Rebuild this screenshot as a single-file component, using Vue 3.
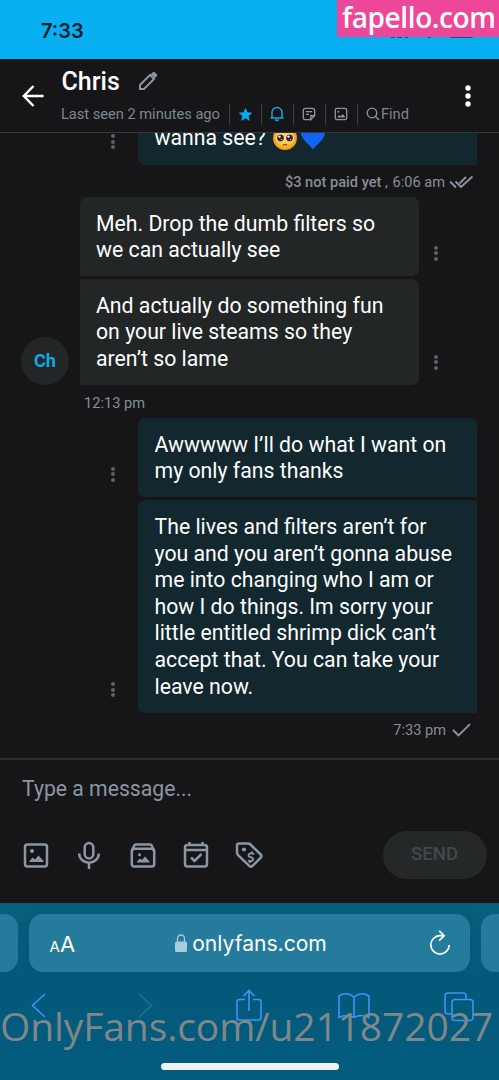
<script setup>
const received = [
  { lines: ['Meh. Drop the dumb filters so', 'we can actually see'] },
  { lines: ['And actually do something fun', 'on your live steams so they', 'aren’t so lame'] },
]
const sent = [
  { lines: ['Awwwww I’ll do what I want on', 'my only fans thanks'] },
  {
    lines: [
      'The lives and filters aren’t for',
      'you and you aren’t gonna abuse',
      'me into changing who I am or',
      'how I do things. Im sorry your',
      'little entitled shrimp dick can’t',
      'accept that. You can take your',
      'leave now.',
    ],
  },
]
</script>

<template>
  <div class="screen">
    <div class="status">
      <span class="clock">7:33</span>
      <svg class="signals" viewBox="0 0 90 3" width="90" height="3">
        <path d="M2 0h4v1H2zM8 0h5v1H8zM16 0h3v1h-3zM39 0h3v1h-3zM60 0h25l-3 1H63z" fill="#075b83" />
      </svg>
      <span class="site">fapello.com</span>
    </div>

    <header class="header">
      <svg class="back" viewBox="0 0 24 24" width="24" height="24">
        <path d="M22.500 12H3M12.500 2 2.800 12l9.700 10" fill="none" stroke="#fff" stroke-width="2.400" />
      </svg>
      <div class="who">
        <div class="name-row">
          <span class="name">Chris</span>
          <svg viewBox="0 0 20 20" width="20" height="20">
            <path d="M2 18v-4L12 4l4 4L6 18z" fill="none" stroke="#8a96a3" stroke-width="2" />
            <path d="m12.800 3.200 2-2q1-1 2 0l2 2q1 1 0 2l-2 2z" fill="#8a96a3" />
          </svg>
        </div>
        <div class="sub-row">
          <span class="seen">Last seen 2 minutes ago</span>
          <i class="bar"></i>
          <span class="cell">
            <svg viewBox="0 0 16 16" width="15" height="15">
              <path d="m8 .8 2.100 4.800 5.300.5-4 3.500 1.200 5.200L8 12.100l-4.600 2.700 1.200-5.200-4-3.500 5.300-.5z" fill="#0cabef" />
            </svg>
          </span>
          <i class="bar"></i>
          <span class="cell">
            <svg viewBox="0 0 16 16" width="16" height="16">
              <path d="M1.500 12h13M3 11.800V6.600a5 5 0 0 1 10 0v5.200M6.200 13.500q1.800 2.200 3.600 0" fill="none" stroke="#10a5e6" stroke-width="1.500" />
            </svg>
          </span>
          <i class="bar"></i>
          <span class="cell">
            <svg viewBox="0 0 16 16" width="14" height="14">
              <path d="M10 14.500H4a2.500 2.500 0 0 1-2.500-2.500V4A2.500 2.500 0 0 1 4 1.500h8A2.500 2.500 0 0 1 14.500 4v6L10 14.500V10h4.500M4.500 5.200h7M4.500 8.500H8" fill="none" stroke="#8a96a3" stroke-width="1.500" />
            </svg>
          </span>
          <i class="bar"></i>
          <span class="cell">
            <svg viewBox="0 0 16 16" width="14" height="14">
              <rect x="1.500" y="1.500" width="13" height="13" rx="2" fill="none" stroke="#8a96a3" stroke-width="1.500" />
              <path d="M4 12v-1l2-2 1.500 1.500L10 8l2.500 3v1z" fill="#8a96a3" />
              <circle cx="5" cy="5.500" r="1.100" fill="#8a96a3" />
            </svg>
          </span>
          <i class="bar"></i>
          <span class="find">
            <svg viewBox="0 0 14 14" width="14" height="14">
              <circle cx="6" cy="6" r="4.800" fill="none" stroke="#8a96a3" stroke-width="1.300" />
              <path d="m9.500 9.500 3.500 3.500" stroke="#8a96a3" stroke-width="1.400" />
            </svg>Find
          </span>
        </div>
      </div>
      <svg class="menu" viewBox="0 0 6 24" width="6" height="24" fill="#fff">
        <circle cx="3" cy="4" r="2.700" /><circle cx="3" cy="12" r="2.700" /><circle cx="3" cy="20" r="2.700" />
      </svg>
    </header>

    <main class="chat">
      <div class="row out first">
        <span class="dots"><b></b><b></b><b></b></span>
        <div class="bubble clipped">
          <span>wanna see?</span>
          <svg class="pleading" viewBox="0 0 26 26" width="26" height="26">
            <defs>
              <radialGradient id="face"><stop offset=".5" stop-color="#ffcf3e" /><stop offset="1" stop-color="#ef9817" /></radialGradient>
            </defs>
            <circle cx="13" cy="13" r="12" fill="url(#face)" />
            <circle cx="8.500" cy="13" r="4.100" fill="#fff" /><circle cx="17.500" cy="13" r="4.100" fill="#fff" />
            <circle cx="8.500" cy="13" r="3.400" fill="#3c1d12" /><circle cx="17.500" cy="13" r="3.400" fill="#3c1d12" />
            <circle cx="7.500" cy="11.600" r="1.200" fill="#fff" /><circle cx="16.500" cy="11.600" r="1.200" fill="#fff" />
            <circle cx="9.500" cy="14.500" r=".8" fill="#cda38e" /><circle cx="18.500" cy="14.500" r=".8" fill="#cda38e" />
            <path d="M11 20.500q2-2.200 4 0" fill="none" stroke="#8c4b13" stroke-width="1.200" />
          </svg>
          <svg class="heart" viewBox="0 0 26 26" width="26" height="26">
            <path d="M13 24.500C8 18 1 14 1 7.500 1 1 9 0 13 6c4-6 12-5 12 1.500C25 14 18 18 13 24.500z" fill="#1265f2" />
          </svg>
        </div>
      </div>
      <div class="meta right first-meta">
        <span><strong>$3 not paid yet</strong> ,&nbsp;<span class="time">6:06 am</span></span>
        <svg viewBox="0 0 25 14" width="25" height="14">
          <path d="m1 6.500 6 6M6.500 6.500l5.500 5.500L23.500 1.500M10.500 8.500 17 2" fill="none" stroke="#8a96a3" stroke-width="1.800" />
        </svg>
      </div>

      <section class="incoming">
        <div class="avatar">Ch</div>
        <div class="stack">
          <div v-for="(m, i) in received" :key="i" class="row">
            <div class="bubble"><div v-for="l in m.lines" :key="l">{{ l }}</div></div>
            <span class="dots"><b></b><b></b><b></b></span>
          </div>
        </div>
      </section>
      <div class="meta left">12:13 pm</div>

      <section class="stack">
        <div v-for="(m, i) in sent" :key="i" class="row out">
          <span class="dots"><b></b><b></b><b></b></span>
          <div class="bubble"><div v-for="l in m.lines" :key="l">{{ l }}</div></div>
        </div>
      </section>
      <div class="meta right last-meta">
        <span>7:33 pm</span>
        <svg viewBox="0 0 19 14" width="19" height="14">
          <path d="m1 7 5.500 5.500L18 1.200" fill="none" stroke="#8a96a3" stroke-width="1.800" />
        </svg>
      </div>
    </main>

    <div class="composer">
      <div class="placeholder">Type a message...</div>
      <div class="tools">
        <svg viewBox="0 0 28 28" width="28" height="28">
          <rect x="3" y="3.500" width="22" height="22" rx="2.500" />
          <path class="solid" d="M7.500 21v-1l3-3.500 2.500 2 3.500-4 5 5.500v1z" /><circle class="solid" cx="10" cy="10" r="2" />
        </svg>
        <svg viewBox="0 0 28 28" width="28" height="28">
          <rect x="9.700" y="2" width="8.600" height="15.500" rx="4.300" />
          <path d="M4.200 12.500a9.800 9.200 0 0 0 19.600 0M14 22v6" />
        </svg>
        <svg viewBox="0 0 28 28" width="28" height="28">
          <rect x="2.800" y="7.800" width="22.400" height="17.700" rx="2.500" />
          <path d="M3 10 5 5Q5.500 3.500 7 3.500h14q1.500 0 2 1.500L25 10" />
          <path class="solid" d="M8 21.500v-1l3-3 2 1.500 3-3.500 4.500 5v1z" /><circle class="solid" cx="10.500" cy="13.700" r="1.500" />
        </svg>
        <svg viewBox="0 0 28 28" width="28" height="28">
          <rect x="3" y="4" width="22" height="21.500" rx="2.500" />
          <path d="M3 9h22M7.500 1v4M20.500 1v4M9 16.500l3.500 3.500 7-7" />
        </svg>
        <svg viewBox="0 0 28 28" width="28" height="28">
          <path d="M2 4.500Q2 2.500 4 2.500h9q1.500 0 2.500 1l10.200 10q1.600 1.600 0 3.200l-8.200 8.200q-1.600 1.600-3.200 0l-11-10.500Q2 13 2 11.500z" />
          <circle class="solid" cx="9" cy="8.500" r="2.100" />
          <path class="thin" d="M19 13.300q-2.500-2-4.500-.5t.2 3.100l2 .6q2.800 1.300.8 3t-4.300-.3M17.300 10.500l-.8 2M15.300 20l-.8 2" />
        </svg>
        <button class="send">SEND</button>
      </div>
    </div>

    <footer class="browser">
      <div class="tabs">
        <div class="side"></div>
        <div class="address">
          <span class="aa"><small>A</small>A</span>
          <span class="url">
            <svg viewBox="0 0 12 18" width="12" height="18">
              <rect y="7.500" width="12" height="10.500" rx="1.500" fill="#a4cddd" />
              <path d="M2.500 8V4.500a3.500 3.500 0 0 1 7 0V8" fill="none" stroke="#a4cddd" stroke-width="1.300" />
            </svg>onlyfans.com
          </span>
          <svg class="reload" viewBox="0 0 22 25" width="22" height="25">
            <path d="M15 5.700h-4.200A9.200 9.200 0 1 0 20.200 15M10.200.8l5 4.900-5 5" fill="none" stroke="#fff" stroke-width="1.700" />
          </svg>
        </div>
        <div class="side end"></div>
      </div>
      <div class="nav">
        <svg viewBox="0 0 28 34" width="28" height="34"><path d="M20 5 7.500 16.500 20 28" /></svg>
        <svg viewBox="0 0 28 34" width="28" height="34"><path class="off" d="m10 5 12.500 11.500L10 28" /></svg>
        <svg viewBox="-2 0 28 34" width="28" height="34"><path d="M10 10.500H4.500q-2.500 0-2.500 2.500v15.500Q2 31 4.500 31h19q2.500 0 2.500-2.500V13q0-2.500-2.500-2.500H18M14 22V2M8.500 7 14 1.500 19.500 7" /></svg>
        <svg viewBox="-2 0 32 34" width="32" height="34"><path d="M16 8Q8.500 2 1 7v21.500q7.500-4 15-.2 7.500-3.800 15 .2V7Q23.500 2 16 8zM16 8v20" /></svg>
        <svg viewBox="0 0 30 34" width="30" height="34"><path d="M8 25H4q-3 0-3-3V7q0-3 3-3h15q3 0 3 3v3.500" /><rect x="8" y="10.500" width="21" height="21" rx="3" /></svg>
      </div>
      <div class="home"></div>
      <div class="watermark">OnlyFans.com/u211872027</div>
    </footer>
  </div>
</template>

<style>
body { background: #161618; }
</style>

<style scoped>
* { box-sizing: border-box; }
svg { display: block; flex: none; overflow: visible; }
.screen {
  width: 499px; height: 1080px; overflow: hidden; display: flex; flex-direction: column;
  background: #161618; color: #fefefe; font-family: Roboto, sans-serif;
}
.status { height: 59px; flex: none; background: #08aff1; position: relative; padding: 18px 0 0 41px; }
.clock { font: 600 20px/26px Inter, sans-serif; color: #06202e; }
.signals { position: absolute; left: 389px; top: 37px; }
.site {
  position: absolute; right: 0; top: 0; width: 162px; height: 37px; padding-left: 5px;
  background: #ed4799; font: 600 28px/34px "Open Sans", sans-serif; white-space: nowrap; letter-spacing: -0.400px;
}
.header { height: 74px; flex: none; display: flex; border-bottom: 1px solid #343739; position: relative; }
.back { margin: 25px 0 0 21px; }
.who { margin-left: 16px; padding-top: 7px; }
.name-row { display: flex; align-items: center; height: 30px; gap: 18px; }
.name { font-weight: 500; font-size: 25px; padding-left: .5px; }
.sub-row { display: flex; align-items: center; height: 22px; margin-top: 7px; color: #7c8791; font-size: 15px; white-space: nowrap; }
.seen { width: 168px; letter-spacing: -.040px; font-size: 14.700px; }
.bar { width: 1px; height: 21px; background: #3a4045; }
.cell { width: 31px; display: flex; justify-content: center; }
.cell svg { margin-left: -1px; }
.find { display: flex; align-items: center; padding-left: 8px; gap: 1px; font-size: 14.600px; }
.menu { position: absolute; left: 465px; top: 25px; }

.chat { height: 625px; flex: none; overflow: hidden; }
.row { display: flex; align-items: flex-end; }
.out { justify-content: flex-end; padding-right: 22px; }
.bubble {
  width: 339px; padding: 13.600px 16px 12.500px; border-radius: 0 7px 7px 0; background: #222627;
  font-size: 21.250px; line-height: 26.600px; white-space: nowrap;
}
.out .bubble { background: #12272e; border-radius: 7px 0 0 7px; padding-left: 16.500px; }
.incoming .row:first-child .bubble { border-top-left-radius: 7px; }
.stack .out:first-child .bubble { border-top-right-radius: 7px; }
.stack { display: flex; flex-direction: column; gap: 3px; }
.first { height: 32px; }
.out .clipped { display: flex; align-items: center; padding-top: 5px; padding-bottom: 12px; border-radius: 0 0 0 7px; height: 46px; }
.pleading { margin: -2px 2px 0 6px; }
.heart { margin-top: -2px; }
.dots { display: flex; flex-direction: column; gap: 1.500px; margin: 0 15px 15.500px; }
.out .dots { margin: 0 23.500px 15.500px 24px; }
.dots b { width: 4px; height: 4px; border-radius: 50%; background: #5f6366; }
.first .dots { margin-bottom: 16px; }
.meta { display: flex; align-items: center; color: #858e96; font-size: 14.600px; line-height: 18px; }
.meta strong { font-weight: 500; font-size: 14.600px; }
.time { margin-left: 1px; }
.right { justify-content: flex-end; }
.first-meta { height: 32px; gap: 4px; padding: 1px 25px 0 0; }
.incoming { display: flex; align-items: flex-end; }
.avatar {
  width: 48px; height: 48px; margin: 0 11px 0 21px; border-radius: 50%; background: #222627;
  color: #13a7e4; font-weight: 700; font-size: 18px; line-height: 47px; text-align: center;
}
.left { height: 33px; padding: 2px 0 0 84px; }
.last-meta { height: 34px; gap: 6px; padding-right: 28px; }

.composer { height: 145px; flex: none; border-top: 2px solid #2a2d2e; padding-left: 22px; }
.placeholder { color: #8a96a3; font-size: 21.200px; line-height: 26px; margin-top: 16px; }
.tools { display: flex; align-items: center; margin-top: 29px; height: 48px; gap: 25.300px; }
.tools svg { fill: none; stroke: #8a96a3; stroke-width: 2.500; }
.tools .solid { fill: #8a96a3; stroke: none; }
.tools .thin { stroke-width: 1.900; }
.send {
  width: 104px; height: 48px; margin-left: 95px; border: 0; border-radius: 24px; padding: 0 2px 2px 0;
  background: #242829; color: #42484b; font: 500 18.600px Roboto, sans-serif;
}

.browser { height: 177px; flex: none; background: linear-gradient(#085f7d, #04597a 45%, #035c7e); position: relative; overflow: hidden; }
.tabs { display: flex; gap: 11px; padding-top: 11px; }
.side { width: 18px; height: 58px; background: #247b9c; border-radius: 0 14px 14px 0; }
.end { border-radius: 14px 0 0 14px; width: 19px; }
.address {
  width: 441px; height: 58px; flex: none; border-radius: 14px; background: #247b9c; position: relative;
  display: flex; align-items: center; justify-content: center; box-shadow: 0 3px 10px #004d6a55;
  font-family: Inter, sans-serif;
}
.aa { position: absolute; left: 21px; top: 17px; font-size: 22px; line-height: 26px; }
.aa small { font-size: 15px; }
.url { display: flex; align-items: center; gap: 5px; font-size: 21.100px; padding-left: 4px; }
.reload { position: absolute; left: 400px; top: 16px; }
.nav { display: flex; justify-content: space-between; padding: 17px 25px 0; }
.nav svg { fill: none; stroke: #3d92fb; stroke-width: 1.600; }
.nav .off { stroke: #1d7492; }
.home { position: absolute; left: 161px; top: 160px; width: 178px; height: 7px; border-radius: 4px; background: #f0f4f1; }
.watermark {
  position: absolute; left: 0; top: 96px; font: 400 39px/54px "Open Sans", sans-serif; color: #808788;
  white-space: nowrap; letter-spacing: -.1px;
}
</style>
